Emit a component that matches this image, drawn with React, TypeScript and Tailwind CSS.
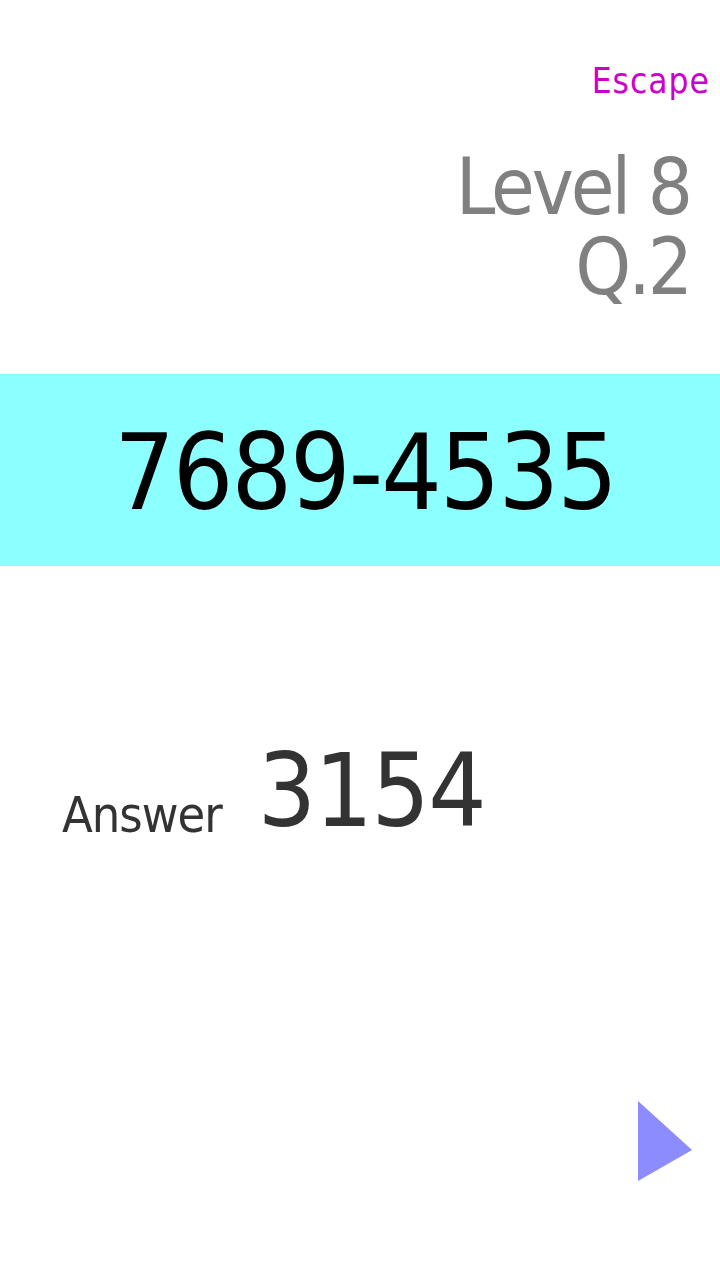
import React from 'react';

const font = { fontFamily: '"DejaVu Sans Condensed", "DejaVu Sans", "Liberation Sans", sans-serif' };

export default function App() {
  return (
    <div className="w-[720px] h-[1280px] bg-white flex flex-col overflow-hidden" style={font}>
      <div className="flex justify-end pr-[10px] pt-[64px]">
        <span className="text-[35px] leading-none tracking-[1px] text-[#cc00cc]">Escape</span>
      </div>

      <div className="flex flex-col items-end gap-[1px] pr-[30px] mt-[49px] text-[#808080] text-[79px] leading-none tracking-[-3px]">
        <span>Level 8</span>
        <span>Q.2</span>
      </div>

      <div className="mt-[67px] h-[192px] bg-[#8cffff] flex items-center justify-center pt-[6px] pl-[10px]">
        <span className="text-[106px] leading-none tracking-[-2px] text-black">7689-4535</span>
      </div>

      <div className="flex items-end pl-[62px] mt-[174px] text-[#333333] gap-[36px]">
        <span className="text-[50px] leading-none tracking-[-1px] mb-[2px]">Answer</span>
        <span className="text-[102px] leading-none tracking-[-1.5px]">3154</span>
      </div>

      <div className="flex-1" />

      <div className="flex justify-end pr-[28px] pb-[99px]">
        <svg width="54" height="80" viewBox="0 0 54 80">
          <polygon points="0,0 54,49 0,80" fill="#8c8cff" />
        </svg>
      </div>
    </div>
  );
}
